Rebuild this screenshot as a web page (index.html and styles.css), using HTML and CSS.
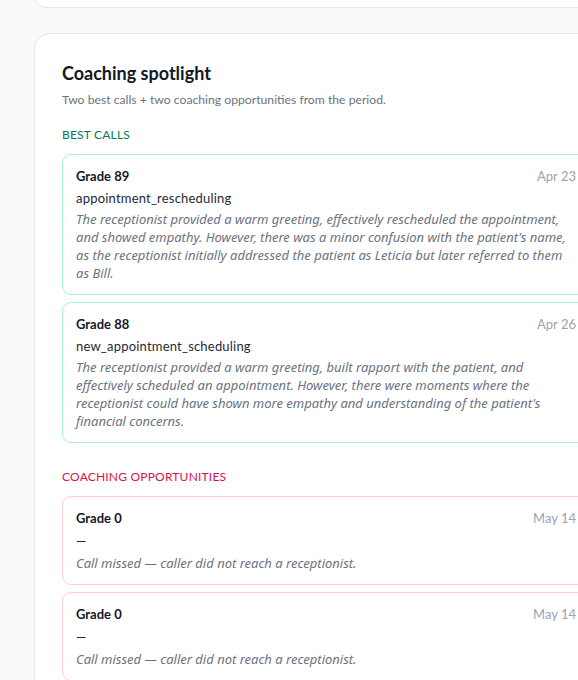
FILE: index.html
```html
<!DOCTYPE html>
<html lang="en">
<head>
<meta charset="utf-8">
<title>Coaching spotlight</title>
<link rel="stylesheet" href="styles.css">
</head>
<body>
<div class="page">
  <div class="card card-top"></div>
  <section class="card spotlight">
    <h2 class="title">Coaching spotlight</h2>
    <p class="subtitle">Two best calls + two coaching opportunities from the period.</p>

    <div class="section">
      <div class="label label-best">BEST CALLS</div>
      <div class="list">
        <article class="call call-best">
          <div class="call-head"><span class="grade">Grade 89</span><span class="date">Apr 23</span></div>
          <div class="category">appointment_rescheduling</div>
          <p class="summary">The receptionist provided a warm greeting, effectively rescheduled the appointment, and showed empathy. However, there was a minor confusion with the patient's name, as the receptionist initially addressed the patient as Leticia but later referred to them as Bill.</p>
        </article>
        <article class="call call-best">
          <div class="call-head"><span class="grade">Grade 88</span><span class="date">Apr 26</span></div>
          <div class="category">new_appointment_scheduling</div>
          <p class="summary">The receptionist provided a warm greeting, built rapport with the patient, and effectively scheduled an appointment. However, there were moments where the receptionist could have shown more empathy and understanding of the patient's financial concerns.</p>
        </article>
      </div>
    </div>

    <div class="section section-coach">
      <div class="label label-coach">COACHING OPPORTUNITIES</div>
      <div class="list">
        <article class="call call-coach">
          <div class="call-head"><span class="grade">Grade 0</span><span class="date">May 14</span></div>
          <div class="category category-empty">—</div>
          <p class="summary">Call missed — caller did not reach a receptionist.</p>
        </article>
        <article class="call call-coach">
          <div class="call-head"><span class="grade">Grade 0</span><span class="date">May 14</span></div>
          <div class="category category-empty">—</div>
          <p class="summary">Call missed — caller did not reach a receptionist.</p>
        </article>
      </div>
    </div>
  </section>
</div>
</body>
</html>
```

FILE: styles.css
```css
* { box-sizing: border-box; }
html, body {
  margin: 0;
  padding: 0;
  background: #f8f9fb;
  overflow: hidden;
}
body {
  font-family: "Lato", "Noto Sans", sans-serif;
  color: #111827;
}
.page {
  padding-left: 34px;
  width: 660px;
}
.card {
  background: #ffffff;
  border: 1px solid #e5e7eb;
  border-radius: 16px;
  width: 585px;
}
.card-top {
  height: 48px;
  margin-top: -40px;
  border-radius: 12px;
}
.spotlight {
  margin-top: 25px;
  padding: 28px 27px 28px 27px;
}
.title {
  margin: 0;
  font-size: 18px;
  line-height: 22px;
  font-weight: 700;
  color: #111827;
}
.subtitle {
  margin: 7px 0 0;
  font-size: 12.2px;
  line-height: 18px;
  color: #6b7280;
}
.section { margin-top: 18px; }
.section-coach { margin-top: 26px; }
.label {
  font-size: 12px;
  line-height: 16px;
  letter-spacing: 0.2px;
}
.label-best { color: #047857; }
.label-coach { color: #d4144c; }
.list {
  margin-top: 11px;
  display: flex;
  flex-direction: column;
  gap: 7px;
}
.call {
  border: 1px solid;
  border-radius: 9px;
  padding: 12px 14px 12px 13px;
  background: #ffffff;
}
.call-best { border-color: #a7f3d0; }
.call-coach { border-color: #fecdd3; }
.call-head {
  display: flex;
  justify-content: space-between;
  align-items: baseline;
  line-height: 18px;
}
.grade {
  font-size: 13px;
  font-weight: 700;
  color: #111827;
}
.date {
  font-size: 13px;
  color: #9ca3af;
}
.category {
  margin-top: 4px;
  font-size: 13px;
  line-height: 18px;
  color: #1f2937;
  letter-spacing: 0.2px;
}
.category-empty {
  line-height: 20px;
}
.summary {
  margin: 3px 0 0;
  font-family: "Noto Sans", "Lato", sans-serif;
  font-size: 13px;
  line-height: 18px;
  font-style: italic;
  color: #6b7280;
}
```
